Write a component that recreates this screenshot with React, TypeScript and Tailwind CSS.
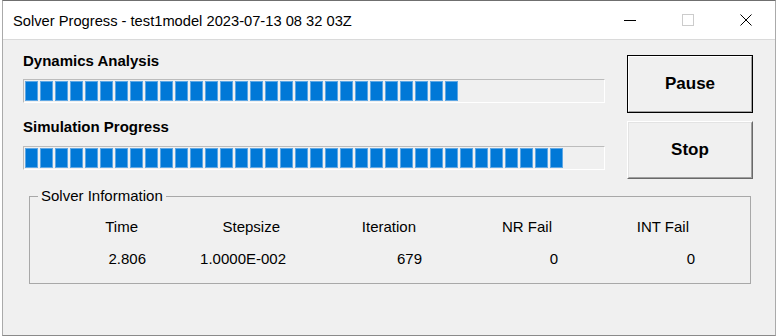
import React from 'react';

const TOTAL_FONT = "font-['Liberation_Sans',Arial,sans-serif]";

function ProgressBar({ filled, className }: { filled: number; className?: string }) {
  return (
    <div
      className={`flex h-[24px] w-[582px] gap-[2px] border border-t-[#bcbcbc] border-l-[#bcbcbc] border-b-white border-r-white bg-[#f0f0f0] p-[1px] ${className ?? ''}`}
    >
      {Array.from({ length: filled }).map((_, i) => (
        <div key={i} className="h-[20px] w-[13px] shrink-0 border border-[#5ea7e4] bg-[#0078d7]" />
      ))}
    </div>
  );
}

const columns = [
  { label: 'Time', value: '2.806' },
  { label: 'Stepsize', value: '1.0000E-002' },
  { label: 'Iteration', value: '679' },
  { label: 'NR Fail', value: '0' },
  { label: 'INT Fail', value: '0' },
];

export default function App() {
  return (
    <div className={`h-[336px] w-[776px] overflow-hidden bg-white pl-[2px] ${TOTAL_FONT}`}>
      <div className="flex h-[336px] w-[774px] flex-col border border-t-[#6f6f6f] border-x-[#aaaaaa] border-b-[#8a8a8a]">
        {/* Title bar */}
        <div className="flex h-[39px] shrink-0 items-center border-b border-[#dadada] bg-white">
          <span className="pl-[10px] pt-[1px] text-[14.7px] leading-[16px] text-black">
            Solver Progress - test1model 2023-07-13 08 32 03Z
          </span>
          <div className="ml-auto flex h-full">
            <div className="flex w-[58px] items-center justify-center">
              <svg width="12" height="12" viewBox="0 0 12 12">
                <path d="M0 6.5h12" stroke="#000" strokeWidth="1" />
              </svg>
            </div>
            <div className="flex w-[58px] items-center justify-center">
              <svg width="12" height="12" viewBox="0 0 12 12">
                <rect x="0.5" y="0.5" width="11" height="11" fill="none" stroke="#cccccc" strokeWidth="1" />
              </svg>
            </div>
            <div className="flex w-[58px] items-center justify-center">
              <svg width="12" height="12" viewBox="0 0 12 12">
                <path d="M0.5 0.5L11.5 11.5M11.5 0.5L0.5 11.5" stroke="#000" strokeWidth="1" />
              </svg>
            </div>
          </div>
        </div>

        {/* Client area */}
        <div className="flex-1 bg-[#f0f0f0] pl-[20px] pt-[13px] text-black">
          <div className="flex items-start">
            <div className="w-[582px]">
              <div className="text-[15px] font-bold leading-[16px]">Dynamics Analysis</div>
              <ProgressBar filled={29} className="mt-[10px]" />
              <div className="mt-[16px] text-[15px] font-bold leading-[16px]">Simulation Progress</div>
              <ProgressBar filled={36} className="mt-[11px]" />
            </div>

            <div className="ml-[22px] mt-[2px] flex flex-col gap-[8px]">
              <button className="h-[58px] w-[126px] border border-black bg-[#f0f0f0] p-0">
                <span className="flex h-full w-full items-center justify-center border border-t-white border-l-white border-b-[#a0a0a0] border-r-[#a0a0a0] text-[17px] font-bold">
                  Pause
                </span>
              </button>
              <button className="h-[58px] w-[126px] border border-t-white border-l-white border-b-[#696969] border-r-[#696969] bg-[#f0f0f0] p-0">
                <span className="flex h-full w-full items-center justify-center border border-t-[#e3e3e3] border-l-[#e3e3e3] border-b-[#a0a0a0] border-r-[#a0a0a0] text-[17px] font-bold">
                  Stop
                </span>
              </button>
            </div>
          </div>

          <fieldset className="ml-[6px] mt-[9px] w-[722px] border border-[#a8a8a8] pb-[16px]">
            <legend className="ml-[8px] px-[3px] text-[15px] leading-[16px]">Solver Information</legend>
            <div className="mt-[15px] grid grid-cols-[120px_140px_136px_136px_137px] text-[15px] leading-[16px]">
              {columns.map((c) => (
                <div key={c.label} className="text-right">
                  <div className={c.label === 'Time' ? 'pr-[12px]' : 'pr-[10px]'}>{c.label}</div>
                  <div className="mt-[16px] pr-[4px]">{c.value}</div>
                </div>
              ))}
            </div>
          </fieldset>
        </div>
      </div>
    </div>
  );
}
